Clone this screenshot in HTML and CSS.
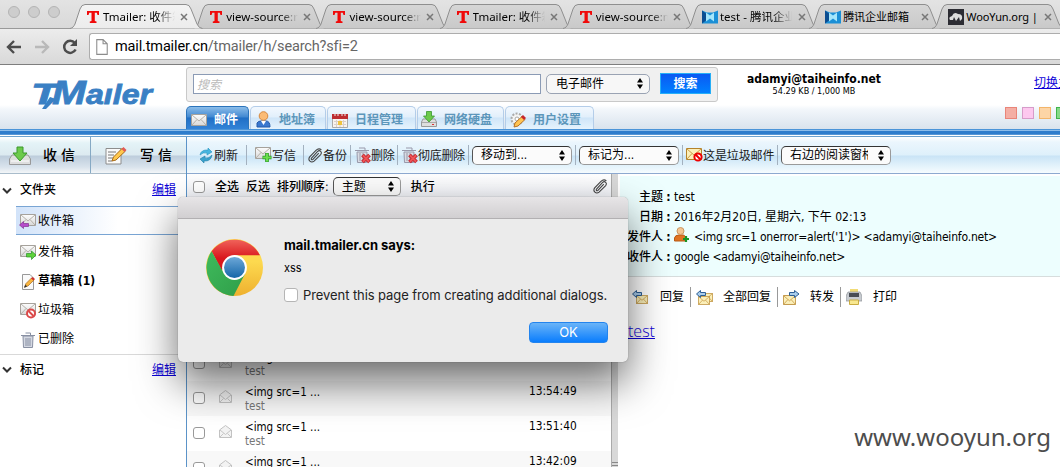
FILE: index.html
```html
<!DOCTYPE html>
<html lang="zh-CN">
<head>
<meta charset="utf-8">
<title>Tmailer: 收件箱</title>
<link rel="stylesheet" href="styles.css">
</head>
<body>
<svg class="defs" width="0" height="0">
  <defs>
    <linearGradient id="gTab" x1="0" y1="0" x2="0" y2="1"><stop offset="0" stop-color="#d6d6d6"/><stop offset="1" stop-color="#c9c9c9"/></linearGradient>
    <linearGradient id="gTabOn" x1="0" y1="0" x2="0" y2="1"><stop offset="0" stop-color="#f3f3f3"/><stop offset="1" stop-color="#ececec"/></linearGradient>
    <linearGradient id="gEnv" x1="0" y1="0" x2="0" y2="1"><stop offset="0" stop-color="#fdfdfd"/><stop offset="1" stop-color="#d8d8d8"/></linearGradient>
    <linearGradient id="gRed" x1="0" y1="0" x2="0" y2="1"><stop offset="0" stop-color="#f0635a"/><stop offset=".6" stop-color="#d9171d"/></linearGradient>
    <linearGradient id="gGreen" x1="0" y1="0" x2="1" y2="1"><stop offset="0" stop-color="#3fba5c"/><stop offset="1" stop-color="#2f9e49"/></linearGradient>
    <linearGradient id="gYel" x1="0" y1="0" x2="0" y2="1"><stop offset=".4" stop-color="#fdd94f"/><stop offset="1" stop-color="#eeb02f"/></linearGradient>
    <linearGradient id="gBlue" x1="0" y1="0" x2="0" y2="1"><stop offset="0" stop-color="#6da8d8"/><stop offset="1" stop-color="#1566a8"/></linearGradient>
  </defs>
  <symbol id="tab" viewBox="0 0 133 25"><path d="M0 24.5C3 24 4 22 5 20L10 5Q11.500.5 15 .5H116Q119.500.5 121 5L127 20Q129 24.500 132.500 24.500" stroke="#8f8f8f"/></symbol>
  <symbol id="tee" viewBox="0 0 12 12"><path fill="#f00a0a" d="M0 0H12V4H10.500L9.800 1.800H7.800V10L9.500 10.600V12H2.800V10.600L4.500 10V1.800H2.300L1.500 4H0z"/></symbol>
  <symbol id="x" viewBox="0 0 8 8"><path d="M1 1L7 7M7 1L1 7" stroke="#777" stroke-width="1.500"/></symbol>
  <symbol id="qq" viewBox="0 0 16 13"><path fill="#1b8fd6" d="M0 0L5 2H11L16 0V13H0z"/><path fill="#0b4d91" d="M0 0L4 3V10L0 13z"/><path fill="#a5e6fb" d="M4 2L8 5 12 2V11L8 8 4 11z"/></symbol>
  <symbol id="updown" viewBox="0 0 6 11"><path d="M3 0L6 4.500H0zM3 11L6 6.500H0z"/></symbol>
  <symbol id="env" viewBox="0 0 16 12"><path d="M.5.5H15.500V11.500H.5z" fill="url(#gEnv)" stroke="#a6a29c"/><path d="M1 1L8 7 15 1M1 11L6 5.500M15 11L10 5.500" fill="none" stroke="#b5b1aa"/></symbol>
  <symbol id="genv" viewBox="0 0 16 12"><path d="M.5.5H15.500V11.500H.5z" fill="#fbefb9" stroke="#b5832a"/><path d="M1 1L8 7 15 1M1 11L6 5.500M15 11L10 5.500" fill="none" stroke="#ca9d48"/></symbol>
  <symbol id="download" viewBox="0 0 22 19"><path d="M3 9L0.500 13V18.500H21.500V13L19 9z" fill="#dedede" stroke="#999"/><path d="M2 15H20" stroke="#fff"/><path d="M8 1H14V7H18L11 15 4 7H8z" fill="#6cca4b" stroke="#3a982d"/></symbol>
  <symbol id="compose" viewBox="0 0 22 19"><path d="M1 2.500H16V18H1z" fill="#fafafa" stroke="#8d8d8d"/><path d="M3 6H11M3 9H9M3 12H8M3 15H7" stroke="#777"/><path d="M7 15L8.500 11 17.500 2 20.500 5 11 14z" fill="#ffc84e" stroke="#a86a17"/><path d="M16.500 3L18.500 1 21.500 4 19.500 6z" fill="#e25b55"/></symbol>
  <symbol id="refresh" viewBox="0 0 14 15"><path d="M1 7Q2 1.500 9 2V0L13 4 8 7V5Q4 4 1 7z" fill="#46b5df" stroke="#2794bf" stroke-width=".6"/><path d="M13 7Q12 13.500 5 13V15L1 11 6 8V10Q10 11 13 7z" fill="#3aa2cd" stroke="#227da4" stroke-width=".6"/></symbol>
  <symbol id="clip" viewBox="0 0 16 16"><path d="M3.500 11L10 3.800Q12 2 13.500 3.500T13.500 7L6.500 14Q4 15.800 2 14T1.800 9.500L8.500 2.500Q11.500-.3 14.300 2M5 12.500L11.500 5.500M3.500 11Q3.200 13 5 12.500" fill="none" stroke="#444" stroke-width="1.150"/></symbol>
  <symbol id="bin" viewBox="0 0 14 16"><path d="M2 4H12L11.500 15.500H2.500z" fill="#d4d8e2" stroke="#8990a2"/><path d="M0 3.500H14M4.500 1H9.500V3M5 6V14M7 6V14M9 6V14" fill="none" stroke="#8890a3"/></symbol>
  <symbol id="bindel" viewBox="0 0 16 17"><path d="M2 5H12L11.500 15.500H2.500z" fill="#d9dce4" stroke="#99a"/><path d="M0 3.500H14M4 1H10V3M5 6V14M8 6V14" fill="none" stroke="#99a"/><path d="M7.500 8L14.500 15M14.500 8L7.500 15" stroke="#bd2028" stroke-width="3.800"/><path d="M7.800 8.300L14.200 14.700M14.200 8.300L7.800 14.700" stroke="#ef5457" stroke-width="2"/></symbol>
  <symbol id="openenv" viewBox="0 0 13 13"><path d="M.5 5L6.500.5 12.500 5V12.500H.5z" fill="#f3f3f3" stroke="#c2c2c2"/><path d="M1 5L6.500 9.500 12 5M1 12L4.500 8.500M12 12L8.500 8.500" fill="none" stroke="#c6c6c6"/></symbol>
  <symbol id="chev" viewBox="0 0 10 7"><path d="M1 1.500L5 5.500 9 1.500" fill="none" stroke="#333" stroke-width="2"/></symbol>
  <symbol id="arrow" viewBox="0 0 10 8"><path d="M.5 4L4.500.5V2.500H9.500V5.500H4.500V7.500z"/></symbol>
</svg>

<div class="screen">
  <div class="tabstrip">
    <div class="lights"><i></i><i></i><i></i></div>
    <div class="tabs">
      <div class="tab on"><svg class="shape" fill="url(#gTabOn)"><use href="#tab"/></svg><svg class="fav"><use href="#tee"/></svg><span class="ttl">Tmailer: 收件箱</span><svg class="cls"><use href="#x"/></svg></div>
      <div class="tab"><svg class="shape" fill="url(#gTab)"><use href="#tab"/></svg><svg class="fav"><use href="#tee"/></svg><span class="ttl">view-source:m</span><svg class="cls"><use href="#x"/></svg></div>
      <div class="tab"><svg class="shape" fill="url(#gTab)"><use href="#tab"/></svg><svg class="fav"><use href="#tee"/></svg><span class="ttl">view-source:m</span><svg class="cls"><use href="#x"/></svg></div>
      <div class="tab"><svg class="shape" fill="url(#gTab)"><use href="#tab"/></svg><svg class="fav"><use href="#tee"/></svg><span class="ttl">Tmailer: 收件箱</span><svg class="cls"><use href="#x"/></svg></div>
      <div class="tab"><svg class="shape" fill="url(#gTab)"><use href="#tab"/></svg><svg class="fav"><use href="#tee"/></svg><span class="ttl">view-source:m</span><svg class="cls"><use href="#x"/></svg></div>
      <div class="tab wide"><svg class="shape" fill="url(#gTab)"><use href="#tab"/></svg><svg class="fav"><use href="#qq"/></svg><span class="ttl">test - 腾讯企业</span><svg class="cls"><use href="#x"/></svg></div>
      <div class="tab wide"><svg class="shape" fill="url(#gTab)"><use href="#tab"/></svg><svg class="fav"><use href="#qq"/></svg><span class="ttl full cjk">腾讯企业邮箱</span><svg class="cls"><use href="#x"/></svg></div>
      <div class="tab wide"><svg class="shape" fill="url(#gTab)"><use href="#tab"/></svg><svg class="fav sq" viewBox="0 0 16 16"><path d="M0 0H16V16H0z" fill="#2c2c33"/><path d="M2 11Q0 8 4 7 6 2 10 5 15 5 14 10L12 12 11 8 8 12 6 8 5 11z" fill="#ddd"/></svg><span class="ttl full tight">WooYun.org |</span><svg class="cls"><use href="#x"/></svg></div>
    </div>
  </div>
  <div class="addressbar">
    <svg width="16" height="14" viewBox="0 0 16 14"><path d="M8 1L2 7 8 13M2.500 7H15" fill="none" stroke="#4d4d4d" stroke-width="2.400"/></svg>
    <svg width="16" height="14" viewBox="0 0 16 14"><path d="M8 1L14 7 8 13M13.500 7H1" fill="none" stroke="#b9b9b9" stroke-width="2.400"/></svg>
    <svg width="16" height="16" viewBox="0 0 16 16"><path d="M12.800 4A6 6 0 1 0 13.600 10.500" fill="none" stroke="#4d4d4d" stroke-width="2.500"/><path d="M15 0V7H8z" fill="#4d4d4d"/></svg>
    <div class="omnibox"><svg width="12" height="16" viewBox="0 0 11 15"><path d="M.6.6H6.500L10.400 4.500V14.400H.6zM6.500.6V4.500H10.400" fill="#fff" stroke="#8c8c8c"/></svg><span class="url"><b>mail.tmailer.cn</b>/tmailer/h/search?sfi=2</span></div>
  </div>

  <div class="masthead">
    <div class="brand">
      <svg width="128" height="36" viewBox="0 0 128 36"><path d="M10 32L18 20 24 22 14 32z" fill="#3a80c4"/><text class="logo" y="27"><tspan x="-1" font-size="30" textLength="27" lengthAdjust="spacingAndGlyphs">T</tspan><tspan x="20" font-size="34" textLength="34" lengthAdjust="spacingAndGlyphs">M</tspan><tspan x="54" font-size="27" textLength="66" lengthAdjust="spacingAndGlyphs">aıler</tspan></text></svg>
    </div>
    <div class="center">
      <div class="searchbox">
        <div class="field">搜索</div>
        <div class="select s-kind"><span>电子邮件</span><svg><use href="#updown"/></svg></div>
        <div class="go">搜索</div>
      </div>
      <div class="nav">
        <div class="n n1"><svg width="16" height="12"><use href="#env"/></svg>邮件</div>
        <div class="n n2"><svg width="15" height="17" viewBox="0 0 15 17"><path d="M1 16V12Q2 10 5 10H10Q14 10 14 16z" fill="#3a78cf" stroke="#255aa9"/><path d="M5 10L7.500 14 10 10z" fill="#fff"/><circle cx="7.500" cy="5" r="4.300" fill="#fbbb75" stroke="#d6883f"/></svg>地址簿</div>
        <div class="n n3"><svg width="16" height="16" viewBox="0 0 16 16"><path d="M.5 2.500H15.500V15.500H.5z" fill="#f8f3ef" stroke="#aaa"/><path d="M0 2H16V7H0z" fill="#bd2c30"/><path d="M3 0V4M6 0V4M10 0V4M13 0V4" stroke="#eee"/><path d="M2 9.500H14M2 12.500H14M4.500 8V15M8 8V15M11.500 8V15" stroke="#d9d0ca"/><path d="M6 9H10V13H6z" fill="#efc33e"/></svg>日程管理</div>
        <div class="n n4"><svg width="16" height="17" viewBox="0 0 16 17"><path d="M2 8L.5 11V15.500H15.500V11L14 8z" fill="#dedede" stroke="#999"/><path d="M1 11.500H15" stroke="#aaa"/><path d="M11 13.500H13" stroke="#d33"/><path d="M5.500.5H10.500V5H13.500L8 11 2.500 5H5.500z" fill="#6cca4b" stroke="#3a982d" stroke-width=".8"/></svg>网络硬盘</div>
        <div class="n n5"><svg width="16" height="16" viewBox="0 0 16 16"><circle cx="7" cy="7" r="5.500" fill="#f4f4f4" stroke="#aaa" stroke-width="2" stroke-dasharray="2 1.400"/><circle cx="7" cy="7" r="2" fill="#fff" stroke="#aaa"/><path d="M4 15L5 11 12 4.500 15 7.500 8 14z" fill="#ffc453" stroke="#b77227"/><path d="M11 5L13 3 16 6 14 8z" fill="#c7262c"/></svg>用户设置</div>
      </div>
    </div>
    <div class="account"><strong>adamyi@taiheinfo.net</strong><span>54.29 KB / 1,000 MB</span></div>
    <div class="themes"><a class="lnk">切换主题</a><div class="swatches"><i class="c1"></i><i class="c2"></i><i class="c3"></i><i class="c4"></i></div></div>
  </div>
  <div class="bluebar"></div>

  <div class="main">
    <div class="side">
      <div class="bigs">
        <div class="big"><svg width="22" height="19"><use href="#download"/></svg>收 信</div>
        <div class="big b2"><svg width="22" height="19"><use href="#compose"/></svg>写 信</div>
      </div>
      <div class="head"><svg width="10" height="7"><use href="#chev"/></svg><b>文件夹</b><a class="lnk">编辑</a></div>
      <div class="item sel"><svg width="18" height="16" viewBox="0 0 18 16"><use href="#env" width="16" height="12" x="1"/><use href="#arrow" x="0" y="7" width="10" height="8" fill="#b64bcb" stroke="#843092" stroke-width=".7"/></svg>收件箱</div>
      <div class="item"><svg width="18" height="16" viewBox="0 0 18 16"><use href="#env" width="16" height="12" x="1"/><path d="M17 10L12.500 6V8.500H7.500V12H12.500V14.500z" fill="#5fd13b" stroke="#2a942a" stroke-width=".7"/></svg>发件箱</div>
      <div class="item bold"><svg width="18" height="16" viewBox="0 0 18 16"><path d="M3.500.5H11L14.500 4V15.500H3.500z" fill="#fafafa" stroke="#999"/><path d="M5.500 13L7 9.500 12.500 4 15 6 9 12z" fill="#f9b53d" stroke="#a56b23" stroke-width=".7"/><path d="M12 4.500L13.500 3 16 5 14.700 6.500z" fill="#ce3030"/><path d="M5 14L8 12.500 6.500 10.500z" fill="#333"/></svg>草稿箱&nbsp;(1)</div>
      <div class="item"><svg width="18" height="16" viewBox="0 0 18 16"><use href="#env" width="16" height="12" x="1"/><circle cx="12" cy="10.500" r="4" fill="#fff" stroke="#dc4a4a" stroke-width="2"/><path d="M9.500 8L14.500 13" stroke="#dc4a4a" stroke-width="2"/></svg>垃圾箱</div>
      <div class="item"><svg width="18" height="16" viewBox="-2 0 18 16"><use href="#bin" width="14" height="16"/></svg>已删除</div>
      <div class="rule"></div>
      <div class="head tags"><svg width="10" height="7"><use href="#chev"/></svg><b>标记</b><a class="lnk">编辑</a></div>
    </div>

    <div class="work">
      <div class="tools">
        <div class="t t1"><svg width="14" height="15"><use href="#refresh"/></svg><span>刷新</span></div>
        <div class="t t2"><svg width="17" height="16" viewBox="0 0 17 16"><use href="#env" width="16" height="12"/><path d="M12 6V15M7.500 10.500H16.500" stroke="#269b20" stroke-width="3.600"/><path d="M12 6.600V14.400M8.100 10.500H15.900" stroke="#6bdd4c" stroke-width="2"/></svg><span>写信</span></div>
        <div class="t t3"><svg width="15" height="15"><use href="#clip"/></svg><span>备份</span></div>
        <div class="t t4"><svg width="16" height="17"><use href="#bindel"/></svg><span>删除</span></div>
        <div class="t t5"><svg width="16" height="17"><use href="#bindel"/></svg><span>彻底删除</span></div>
        <div class="t t6"><div class="select s-move"><span>移动到...</span><svg><use href="#updown"/></svg></div></div>
        <div class="t t7"><div class="select s-mark"><span>标记为...</span><svg><use href="#updown"/></svg></div></div>
        <div class="t t8"><svg width="17" height="14" viewBox="0 0 17 14"><use href="#genv" width="16" height="12"/><circle cx="12" cy="9" r="3.600" fill="#fff" stroke="#e00" stroke-width="2"/><path d="M9.500 6.500L14.500 11.500" stroke="#e00" stroke-width="2"/></svg><span>这是垃圾邮件</span></div>
        <div class="t t9"><div class="select s-pane"><span>右边的阅读窗格</span><svg><use href="#updown"/></svg></div></div>
      </div>
      <div class="panes">
        <div class="list">
          <div class="sort"><i class="cb"></i><b class="so1">全选</b><b class="so2">反选</b><b class="so3">排列顺序:</b><div class="select s-sort"><span>主题</span><svg><use href="#updown"/></svg></div><b class="so4">执行</b><svg class="att" width="15" height="15"><use href="#clip"/></svg></div>
          <div class="rows">
            <div class="row"><i class="cb"></i><svg><use href="#openenv"/></svg><p>&lt;img src=1 ...<br><em>test</em></p></div>
            <div class="row alt"><i class="cb"></i><svg><use href="#openenv"/></svg><p>&lt;img src=1 ...<br><em>test</em></p><time>13:54:49</time></div>
            <div class="row"><i class="cb"></i><svg><use href="#openenv"/></svg><p>&lt;img src=1 ...<br><em>test</em></p><time>13:51:40</time></div>
            <div class="row alt"><i class="cb"></i><svg><use href="#openenv"/></svg><p>&lt;img src=1 ...</p><time>13:42:09</time></div>
          </div>
        </div>
        <div class="split"><i></i></div>
        <div class="reader">
          <div class="meta">
            <div><label>主题<s>:</s></label><span class="m1">test</span></div>
            <div><label>日期<s>:</s></label><span class="m2">2016年2月20日, 星期六, 下午 02:13</span></div>
            <div><label>发件人<s>:</s></label><svg width="16" height="16" viewBox="0 0 16 16"><path d="M.5 14V11Q1 8 5 8H9Q12 8 12 14z" fill="#e07423" stroke="#b95a15"/><circle cx="6.500" cy="4" r="3.500" fill="#f4c592" stroke="#cb9660"/><path d="M12 9V15M9 12H15" stroke="#189424" stroke-width="2.200"/></svg><span class="m3">&lt;img src=1 onerror=alert('1')&gt; &lt;adamyi@taiheinfo.net&gt;</span></div>
            <div><label>收件人<s>:</s></label><span class="m4">google &lt;adamyi@taiheinfo.net&gt;</span></div>
          </div>
          <div class="acts">
            <div class="a a1"><svg width="17" height="15" viewBox="0 0 17 15"><use href="#genv" x="4" y="5" width="12" height="9"/><use href="#arrow" width="10" height="8" fill="#a9cdec" stroke="#2e5f95"/></svg>回复</div>
            <div class="a a2"><svg width="17" height="15" viewBox="0 0 17 15"><use href="#genv" x="5" y="3" width="12" height="9"/><use href="#genv" x="2" y="6" width="12" height="9"/><use href="#arrow" width="10" height="8" fill="#a9cdec" stroke="#2e5f95"/></svg>全部回复</div>
            <div class="a a3"><svg width="17" height="15" viewBox="0 0 17 15"><use href="#genv" y="5" width="13" height="10"/><path d="M16 4L11.500.5V2.500H6.500V5.500H11.500V7.500z" fill="#a9cdec" stroke="#2e5f95"/></svg>转发</div>
            <div class="a a4"><svg width="16" height="16" viewBox="0 0 16 16"><path d="M4 0H12V5H4z" fill="#f2dc76"/><path d="M2 3H14L16 7V12H0V7z" fill="#c7cbd0" stroke="#8c9096" stroke-width=".7"/><path d="M3 4H13V8H3z" fill="#494d54"/><path d="M3.500 11H12.500V15.500H3.500z" fill="#f8e890" stroke="#c9ac42"/></svg>打印</div>
          </div>
          <div class="body"><a class="lnk">test</a></div>
        </div>
      </div>
    </div>
  </div>

  <div class="dialog">
    <div class="dbar"></div>
    <div class="dbody">
      <svg width="57" height="57" viewBox="0 0 56 56"><circle cx="28" cy="28" r="28" fill="url(#gYel)"/><path d="M5.500 12A28 28 0 0 1 53 16H28L15.500 31z" fill="url(#gRed)"/><path d="M5.500 12A28 28 0 0 0 27 56L38.500 34 28 28 16 31z" fill="url(#gGreen)"/><circle cx="28" cy="28" r="12.200" fill="#fff"/><circle cx="28" cy="28" r="10.300" fill="url(#gBlue)"/></svg>
      <div class="dtext">
        <h1>mail.tmailer.cn says:</h1>
        <p>xss</p>
        <div class="chk"><i></i><span>Prevent this page from creating additional dialogs.</span></div>
        <div class="ok">OK</div>
      </div>
    </div>
  </div>
  <div class="watermark">www.wooyun.org</div>
</div>
</body>
</html>
```
FILE: styles.css
```css
* { box-sizing: border-box; }
body { margin: 0; }
svg { flex: none; display: block; }
.defs { position: absolute; }
.screen {
  position: relative; width: 1060px; height: 467px; overflow: hidden; background: #fff;
  display: flex; flex-direction: column;
  font: 12px/16px "DejaVu Sans Condensed", "Noto Sans CJK SC", sans-serif; color: #000; white-space: nowrap;
}
.lnk { color: #0c00d8; text-decoration: underline; }

/* browser frame */
.tabstrip { height: 29px; flex: none; background: linear-gradient(#e3e3e3, #d9d9d9); display: flex; border-bottom: 1px solid #999; }
.lights { display: flex; gap: 8px; padding: 6px 0 0 8px; width: 70px; flex: none; }
.lights i { width: 12px; height: 12px; border-radius: 50%; background: #cdcdcd; border: 1px solid #b4b4b4; }
.tabs { display: flex; }
.tab { position: relative; width: 123.200px; height: 29px; padding: 4px 0 0 17px; display: flex; align-items: center; flex: none; font: 11.500px/16px "Noto Sans", "Noto Sans CJK SC", sans-serif; }
.shape { position: absolute; left: 0; top: 4px; width: 133px; height: 25px; z-index: 0; }
.on { z-index: 2; }
.fav { position: relative; width: 12px; height: 12px; margin-right: 4px; }
.wide .fav { width: 16px; height: 14px; margin: 0 2px 0 -1px; }
.wide .fav.sq { height: 16px; }
.ttl { position: relative; width: 72px; overflow: hidden; -webkit-mask-image: linear-gradient(90deg, #000 75%, transparent); }
.ttl.full { -webkit-mask-image: none; }
.ttl.cjk { font-size: 11px; }
.ttl.tight { font-size: 11px; letter-spacing: -.1px; }
.cls { position: relative; width: 8px; height: 8px; margin-left: 5px; }
.wide .cls { margin-left: 6px; }
.addressbar { height: 36px; flex: none; background: linear-gradient(#ececec, #d9d9d9); border-bottom: 1px solid #7e7e7e; display: flex; align-items: center; padding: 0 0 0 6px; gap: 12px; }
.omnibox { flex: 1; margin-left: -1px; height: 27px; background: #fff; border: 1px solid #adadad; border-right: 0; border-radius: 3px 0 0 3px; display: flex; align-items: center; padding-left: 6px; gap: 7px; }
.url { font: 14.500px/20px Roboto, sans-serif; letter-spacing: -.15px; color: #666; }
.url b { font-weight: 400; color: #000; }

/* masthead */
.masthead { height: 64px; flex: none; display: flex; background: linear-gradient(#fff 40px, #f3f7fb 44px, #d9e3ed 64px); }
.brand { width: 186px; padding: 12px 0 0 32px; flex: none; }
.logo { font-family: "Liberation Sans", sans-serif; font-weight: 700; font-style: italic; fill: #3a80c4; stroke: #3a80c4; stroke-width: .8; }
.center { width: 532px; flex: none; padding-top: 2px; }
.searchbox { height: 35px; border: 1px solid #c9c9c9; border-radius: 3px; background: #f0f0f0; display: flex; align-items: center; padding: 0 0 2px 6px; }
.field { width: 348px; height: 20px; border: 1px solid #8b9bb5; background: #fff; color: #bbb; font-style: italic; line-height: 20px; padding-left: 3px; }
.select { border: 1px solid #9a9a9a; border-top-color: #333; border-left-color: #555; border-radius: 5px; background: #fbfbfb; height: 19px; display: flex; align-items: center; justify-content: space-between; padding: 0 6px 0 8px; }
.select span { overflow: hidden; }
.select svg { width: 6px; height: 11px; }
.s-kind { width: 104px; height: 20px; margin-left: 5px; border-color: #9aa3b3; background: #f7f7f7; padding-left: 9px; }
.go { width: 51px; height: 21px; margin-left: 10px; background: linear-gradient(#0b59f2, #0080ff); border: 1px solid #25aef7; color: #fff; font-weight: 700; text-align: center; line-height: 20px; }
.nav { display: flex; margin-top: 4px; height: 23px; gap: 1px; }
.n { display: flex; align-items: center; height: 23px; border: 1px solid #b4cde9; border-bottom: 0; border-radius: 5px 5px 0 0; background: linear-gradient(#f2f8fe, #e2effb 45%, #cfe5f8 50%, #e6f3fd); color: #5c96ba; font-weight: 700; padding: 3px 0 0 5px; gap: 8px; }
.n1 { width: 63px; color: #fff; border-color: #2b74bb; background: linear-gradient(#8cbde9, #4289d2 45%, #216fc5 50%, #3283d7); padding-left: 4px; gap: 7px; }
.n2 { width: 76px; } .n3 { width: 89px; padding-left: 4px; gap: 7px; } .n4 { width: 87px; padding-left: 3px; gap: 7px; } .n5 { width: 89px; padding-left: 4px; gap: 7px; }
.account { width: 192px; flex: none; text-align: center; padding-top: 7px; }
.account strong { display: block; line-height: 14px; font-size: 12px; }
.account span { display: block; line-height: 10px; font-size: 9px; }
.themes { padding: 10px 0 0 95px; }
.themes .lnk { display: block; margin-left: 29px; }
.swatches { display: flex; gap: 5px; margin-top: 16px; }
.swatches i { width: 12px; height: 12px; border: 1px solid; flex: none; }
.c1 { background: #f4aea4; border-color: #e98579 !important; } .c2 { background: #fdc8ef; border-color: #d79cc9 !important; }
.c3 { background: #fdd5a6; border-color: #f3b56a !important; } .c4 { background: #86d987; border-color: #3fb44b !important; }
.bluebar { height: 8px; flex: none; background: linear-gradient(#4b94d8 0 1px, #8dbdea 1px 2px, #2f7dcc 2px 5px, #5797d6 5px 6px, #fff 6px 7px, #6fa3cf 7px 8px); }

/* workspace */
.main { display: flex; flex: 1; min-height: 0; }
.side { width: 186px; flex: none; }
.bigs { display: flex; height: 37px; border-bottom: 1px solid #a9bccb; background: linear-gradient(#fff, #e4f3f7 6px, #dceaf0 18px, #bdcddc 19px, #d9e3ec 30px, #f3f6f8); }
.big { width: 91px; display: flex; align-items: center; padding-left: 9px; gap: 12px; font-size: 14px; font-weight: 500; border-right: 1px solid #86a9c4; }
.b2 { width: 95px; padding-left: 14px; gap: 13px; border: 0; }
.head { display: flex; align-items: center; height: 32px; padding-left: 2px; }
.head b { margin-left: 8px; width: 132px; font-weight: 500; }
.item { display: flex; align-items: center; height: 29px; padding-left: 19px; gap: 1px; }
.item svg { margin-top: 2px; }
.item.sel { margin: 0 0 2.500px 16px; padding-left: 3px; border-top: 1px solid #79a5d4; border-bottom: 1px solid #79a5d4; background: linear-gradient(90deg, #d2e3f9, #fff 60%); }
.item.bold { font-weight: 700; }
.rule { height: 1px; background: #d9d9d9; }
.head.tags { height: 30px; }
.work { flex: 1; min-width: 0; border-left: 1px solid #5b93c8; display: flex; flex-direction: column; }
.tools { height: 37px; flex: none; border-bottom: 1px solid #8da9d0; display: flex; align-items: center; background: linear-gradient(#fff, #ebf6fd 5px, #def0fb 18px, #c9e4f6 19px, #def0fa 27px, #f6fcff); }
.t { height: 20px; display: flex; align-items: center; border-right: 1px solid #a3b1bf; flex: none; }
.t > span { padding-top: 2px; color: #1a1a1a; }
.t1 { width: 60px; padding-left: 12px; gap: 1px; }
.t2 { width: 57px; padding-left: 8px; }
.t3 { width: 47px; padding-left: 4px; }
.t4 { width: 47px; padding-left: 4px; }
.t5 { width: 71px; padding-left: 4px; }
.t4, .t5 { letter-spacing: -.3px; }
.t6 { width: 107px; padding-left: 3px; }
.t7 { width: 107px; padding-left: 3px; }
.t8 { width: 95px; padding-left: 3px; letter-spacing: -.1px; }
.t9 { border: 0; padding-left: 3px; }
.s-move, .s-mark { width: 100px; } .s-pane { width: 110px; }
.s-pane span { width: 78px; }
.panes { flex: 1; display: flex; min-height: 0; }
.list { width: 424px; flex: none; overflow: hidden; }
.sort { height: 27px; display: flex; align-items: center; background: linear-gradient(#fff, #eceef4); padding: 0 0 2px 6px; }
.sort b { font-weight: 500; margin-right: 7px; }
.cb { width: 12px; height: 12px; border: 1px solid #999; border-radius: 3px; background: #fff; flex: none; }
.so1 { margin-left: 10px; }
.sort .so3 { margin-right: 4px; }
.s-sort { width: 68px; padding-left: 8px; }
.sort .so4 { margin-left: 10px; width: 175px; }
.rows { margin-top: 145px; }
.row { height: 35px; display: flex; align-items: flex-start; padding-left: 6px; }
.alt { background: #f8f8f8; }
.row .cb { margin-top: 11px; }
.row svg { width: 13px; height: 13px; margin: 9px 0 0 14px; }
.row p { margin: 4px 0 0 13px; width: 284px; line-height: 14px; font-size: 11.500px; }
.row em { font-style: normal; color: #777; }
.row time { margin-top: 2px; font-size: 11.800px; }
.split { width: 7px; flex: none; background: #d8d8d8; border-left: 1px solid #aaa; padding-top: 288px; }
.split i { display: block; height: 4px; border-top: 1px solid #888; border-bottom: 1px solid #888; }
.reader { flex: 1; min-width: 0; }
.meta { margin: 2px 0 0 2px; height: 101px; background: #edfefe; border-bottom: 1px solid #d7dddd; padding-top: 11px; }
.meta div { display: flex; align-items: center; height: 20px; }
.meta label { width: 54px; display: flex; justify-content: flex-end; font-weight: 500; }
.meta s { width: 11px; text-align: center; text-decoration: none; font-weight: 700; }
.meta svg { margin: -4px 4px 0 0; }
.m3 { letter-spacing: -.18px; } .m4 { letter-spacing: -.22px; }
.acts { display: flex; height: 40px; align-items: center; padding-left: 14px; }
.a { display: flex; align-items: center; height: 20px; border-right: 1px solid #999; gap: 11px; }
.a1 { width: 59px; } .a2 { width: 87px; padding-left: 5px; gap: 10px; } .a3 { width: 63px; padding-left: 5px; gap: 10px; } .a4 { padding-left: 5px; gap: 11px; border: 0; }
.body { font: 300 16px/22px "Open Sans", "Noto Sans", sans-serif; padding: 3px 0 0 10px; }

/* alert dialog */
.dialog { position: absolute; left: 178px; top: 197px; width: 450px; height: 165px; border-radius: 5px; background: #ebebeb; box-shadow: 0 0 1px rgba(0,0,0,.5), 0 20px 42px rgba(0,0,0,.58); overflow: hidden; }
.dbar { height: 22px; background: linear-gradient(#e7e5e7, #d1cfd1); border-bottom: 1px solid #b2b0b2; }
.dbody { display: flex; padding: 20px 20px 0 28px; }
.dtext { margin-left: 21px; flex: 1; min-width: 0; font: 13px/16px Inter, sans-serif; }
.dtext h1 { margin: -2px 0 0; font-size: 13px; line-height: 16px; font-weight: 700; letter-spacing: -.02px; }
.dtext p { margin: 7px 0 0; font-size: 11px; }
.chk { display: flex; align-items: center; gap: 5px; margin-top: 11px; color: #222; letter-spacing: -.08px; }
.chk i { width: 14px; height: 14px; border: 1px solid #b5b5b5; border-radius: 3px; background: #fff; flex: none; }
.ok { width: 79px; height: 21px; margin: 19px 0 0 auto; border-radius: 4px; background: linear-gradient(#6ab4f8, #0a7dfd); border: 1px solid #2384ee; color: #fff; text-align: center; line-height: 19px; }
.watermark { position: absolute; right: 9px; bottom: 14px; font: 24px/32px "Noto Sans", sans-serif; color: #4d4d4d; }
```
